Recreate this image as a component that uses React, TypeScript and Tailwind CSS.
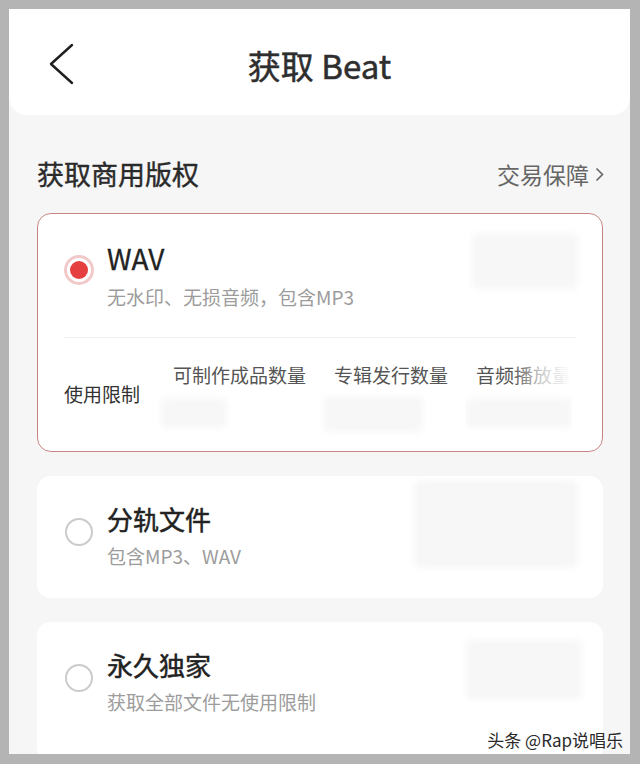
import React from 'react';

const font = { fontFamily: '"Noto Sans CJK SC", "Noto Sans", sans-serif' };

const Blur = ({ className }: { className: string }) => (
  <div className={`rounded-md bg-[#f7f7f7] blur-[3px] ${className}`} />
);

const EmptyRadio = () => (
  <div className="mt-[42px] h-[28px] w-[28px] shrink-0 rounded-full border-[2.5px] border-[#cbcbcb] bg-white" />
);

const limits = ['可制作成品数量', '专辑发行数量'];

const App: React.FC = () => {
  return (
    <div className="h-[764px] w-[640px] bg-[#b4b4b4] pl-[9px] pt-[9px]" style={font}>
      <div className="relative h-[745px] w-[621px] overflow-hidden bg-[#f6f6f6]">
        {/* header */}
        <div className="grid h-[106px] grid-cols-[1fr_auto_1fr] items-center rounded-b-[18px] bg-white">
          <div className="pl-[38px] pt-[4px]">
            <svg width="28" height="44" viewBox="0 0 28 44">
              <path d="M25 3 L4 22 L25 41" fill="none" stroke="#1f1f1f" strokeWidth="2.4" strokeLinecap="round" strokeLinejoin="round" />
            </svg>
          </div>
          <div className="pt-[6px] text-[33px] leading-[40px] text-[#2e2e2e] [-webkit-text-stroke:0.5px_#2e2e2e]">获取 Beat</div>
          <div />
        </div>

        {/* section title */}
        <div className="mt-[41px] flex h-[36px] items-center justify-between pl-[28px] pr-[26px]">
          <span className="text-[27px] text-[#2a2a2a] [-webkit-text-stroke:0.4px_#2a2a2a]">获取商用版权</span>
          <span className="flex items-center gap-[6px] text-[23px] text-[#666666]">
            交易保障
            <svg width="9" height="15" viewBox="0 0 9 15">
              <path d="M1.5 1.5 L7.5 7.5 L1.5 13.5" fill="none" stroke="#666" strokeWidth="1.6" />
            </svg>
          </span>
        </div>

        <div className="mt-[21px] flex flex-col gap-[24px] pl-[28px] pr-[27px]">
          {/* WAV card */}
          <div className="h-[239px] rounded-[14px] border-[1.5px] border-[#c98383] bg-white">
            <div className="flex items-start pl-[26px] pr-[24px]">
              <div className="mt-[41px] flex h-[30px] w-[30px] shrink-0 items-center justify-center rounded-full border-[3px] border-[#f1c9c9] bg-white">
                <div className="h-[18px] w-[18px] rounded-full bg-[#e63f3f]" />
              </div>
              <div className="ml-[13px] flex-1">
                <div className="mt-[26px] text-[28px] leading-[36px] text-[#222] [-webkit-text-stroke:0.3px_#222]">WAV</div>
                <div className="mt-[8px] text-[19px] leading-[26px] text-[#9c9c9c]">无水印、无损音频，包含MP3</div>
              </div>
              <Blur className="mt-[19px] h-[56px] w-[106px]" />
            </div>
            <div className="mx-[26px] mt-[27px] h-px bg-[#eeeeee]" />
            <div className="flex items-start pl-[26px] pr-[30px] pt-[24px]">
              <div className="mt-[19px] w-[76px] shrink-0 text-[19px] leading-[26px] text-[#333]">使用限制</div>
              <div className="ml-[33px] flex flex-1 gap-[28px]">
                {limits.map((l, i) => (
                  <div key={l} className="flex shrink-0 flex-col">
                    <span className="text-[19px] leading-[26px] text-[#555]">{l}</span>
                    <Blur className={i === 0 ? '-ml-[12px] mt-[10px] h-[30px] w-[66px]' : '-ml-[11px] mt-[8px] h-[36px] w-[100px]'} />
                  </div>
                ))}
                <div className="relative -ml-[11px] flex min-w-0 flex-1 flex-col overflow-hidden pl-[11px]">
                  <span className="whitespace-nowrap text-[19px] leading-[26px] text-[#555]">音频播放量</span>
                  <Blur className="-ml-[10px] mt-[10px] h-[30px] w-[106px]" />
                  <div className="absolute right-0 top-0 h-[26px] w-[60px] bg-linear-to-l from-white via-white/70 to-transparent" />
                </div>
              </div>
            </div>
          </div>

          {/* 分轨文件 */}
          <div className="flex h-[122px] items-start rounded-[14px] bg-white pl-[28px] pr-[25px]">
            <EmptyRadio />
            <div className="ml-[14px] flex-1">
              <div className="mt-[26px] text-[26px] leading-[34px] text-[#222] [-webkit-text-stroke:0.5px_#222]">分轨文件</div>
              <div className="mt-[7px] text-[19px] leading-[26px] text-[#9c9c9c]">包含MP3、WAV</div>
            </div>
            <Blur className="mt-[4px] h-[88px] w-[164px]" />
          </div>

          {/* 永久独家 */}
          <div className="flex h-[140px] items-start rounded-[14px] bg-white pl-[28px] pr-[21px]">
            <EmptyRadio />
            <div className="ml-[14px] flex-1">
              <div className="mt-[26px] text-[26px] leading-[34px] text-[#222] [-webkit-text-stroke:0.5px_#222]">永久独家</div>
              <div className="mt-[7px] text-[19px] leading-[26px] text-[#9c9c9c]">获取全部文件无使用限制</div>
            </div>
            <Blur className="mt-[18px] h-[60px] w-[116px]" />
          </div>
        </div>

        <div className="absolute bottom-[2px] right-[7px] text-[17px] leading-[24px] text-[#2a2a2a] [text-shadow:0_0_2px_white,0_0_2px_white]">
          头条 @Rap说唱乐
        </div>
      </div>
    </div>
  );
};

export default App;
